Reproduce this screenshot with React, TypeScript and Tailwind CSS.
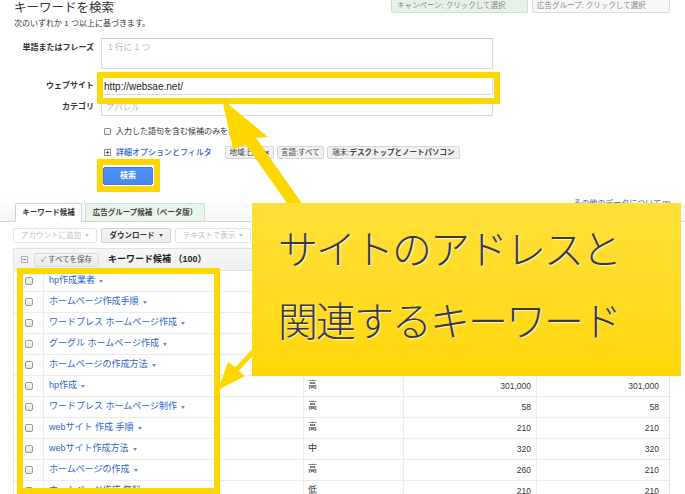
import React from "react";

const rows: [string, string, string, string][] = [
  ["hp作成業者", "高", "1,300", "1,300"],
  ["ホームページ作成手順", "高", "260", "260"],
  ["ワードプレス ホームページ作成", "高", "480", "480"],
  ["グーグル ホームページ作成", "高", "170", "170"],
  ["ホームページの作成方法", "高", "590", "590"],
  ["hp作成", "高", "301,000", "301,000"],
  ["ワードプレス ホームページ制作", "高", "58", "58"],
  ["webサイト 作成 手順", "高", "210", "210"],
  ["webサイト作成方法", "中", "320", "320"],
  ["ホームページの作成", "高", "260", "210"],
  ["ホームページ作成 無料", "低", "210", "210"],
];

function Caret({ cls }: { cls: string }) {
  return (
    <span
      className={`inline-block ml-[4px] w-0 h-0 border-x-[2.5px] border-x-transparent border-t-[3px] ${cls}`}
    />
  );
}

function Check() {
  return (
    <span className="inline-block w-[8px] h-[8px] rounded-[2px] border border-[#9a9a9a] bg-linear-to-b from-white to-[#e4e4e4]" />
  );
}

export default function App() {
  return (
    <div className="relative w-[685px] h-[494px] overflow-hidden bg-white text-[#333] font-['Liberation_Sans','Noto_Sans_CJK_JP',sans-serif]">
      {/* header */}
      <div className="flex h-[19px] pl-[14px] pr-[15px]">
        <h1 className="text-[12.5px] leading-[17px] font-normal text-[#333]">キーワードを検索</h1>
        <div className="ml-auto flex gap-[4px]">
          <div className="w-[137px] h-[13px] bg-[#e6f2e9] border border-[#cddfd1] border-t-0 rounded-b-[2px] text-[7.5px] leading-[12px] text-[#8a8a8a] pl-[5px]">
            キャンペーン: クリックして選択
          </div>
          <div className="w-[138px] h-[13px] bg-[#f8f8f8] border border-[#dcdcdc] border-t-0 rounded-b-[2px] text-[7.5px] leading-[12px] text-[#8a8a8a] pl-[4px]">
            広告グループ: クリックして選択
          </div>
        </div>
      </div>
      <p className="pl-[14px] h-[10px] text-[8px] leading-[10px] text-[#333]">次のいずれか 1 つ以上に基づきます。</p>

      {/* form */}
      <div className="mt-[9px] pl-[14px] grid grid-cols-[80px_392px] gap-x-[7px]">
        <div className="text-right text-[8px] font-bold leading-[10px] pt-[5px]">単語またはフレーズ</div>
        <div className="h-[31px] border border-[#dadada] border-t-[#c8c8c8] pl-[6px] pt-[2px] text-[8.5px] leading-[12px] text-[#b8b8b8]">
          1 行に 1 つ
        </div>

        <div className="mt-[8px] h-[18px] flex items-center justify-end text-[8px] font-bold">ウェブサイト</div>
        <div className="mt-[8px] h-[18px] border border-[#dadada] border-t-[#c8c8c8] pl-[2px] flex items-center text-[10px] text-[#222]">
          http://websae.net/
        </div>

        <div className="mt-[3px] h-[18px] flex items-center justify-end text-[8px] font-bold">カテゴリ</div>
        <div className="mt-[3px] h-[18px] border border-[#dadada] border-t-[#c8c8c8] pl-[4px] flex items-center text-[8.5px] text-[#bbbbbb]">
          アパレル
        </div>

        <div className="col-start-2 mt-[9px] h-[13px] flex items-center pl-[3px] text-[8px]">
          <span className="inline-block w-[7px] h-[7px] rounded-[1px] border border-[#8d8d8d] bg-linear-to-b from-white to-[#e8e8e8]" />
          <span className="ml-[5px]">入力した語句を含む候補のみを表示</span>
        </div>

        <div className="col-start-2 mt-[8px] h-[13px] flex items-center pl-[3px]">
          <svg width="7" height="7" viewBox="0 0 7 7" className="shrink-0">
            <rect x="0.5" y="0.5" width="6" height="6" fill="#fafafa" stroke="#8a8a8a" />
            <path d="M3.5 1.8V5.2M1.8 3.5H5.2" stroke="#555" strokeWidth="1" />
          </svg>
          <span className="ml-[5px] text-[8px] font-medium text-[#2f64c8]">詳細オプションとフィルタ</span>
          <span className="ml-[13px] h-[13px] w-[49px] flex items-center justify-center gap-[3px] bg-[#f1f1f1] border border-[#d6d6d6] rounded-[2px] text-[7.5px] text-[#444]">
            地域:日本 <span className="font-bold text-[#333] text-[8px]">×</span>
          </span>
          <span className="ml-[3px] h-[13px] w-[47px] flex items-center justify-center bg-[#f1f1f1] border border-[#d6d6d6] rounded-[2px] text-[7.5px] text-[#444]">
            言語:すべて
          </span>
          <span className="ml-[3px] h-[13px] w-[133px] flex items-center justify-center bg-[#f1f1f1] border border-[#d6d6d6] rounded-[2px] text-[7.5px] text-[#444]">
            端末: <span className="font-bold">デスクトップとノートパソコン</span>
          </span>
        </div>

        <div className="col-start-2 mt-[8px] ml-[2px] w-[50px] h-[18px] rounded-[2px] border border-[#3a7cec] bg-linear-to-b from-[#4d90fe] to-[#4787ed] flex items-center justify-center text-[8px] font-bold text-white">
          検索
        </div>
      </div>

      {/* tabs */}
      <div className="mt-[11px] h-[26px] flex items-end border-b border-[#d4d4d4] bg-linear-to-b from-white to-[#f5f5f5] pl-[15px] pr-[15px]">
        <div className="w-[67px] h-[19px] -mb-px bg-white border border-[#d0d0d0] border-b-white rounded-t-[2px] flex items-center justify-center text-[7.5px] font-bold text-[#333]">
          キーワード候補
        </div>
        <div className="ml-[3px] w-[120px] h-[18px] bg-[#e9f4eb] border border-[#cfdccf] border-b-0 rounded-t-[2px] flex items-center justify-center text-[7.5px] font-bold text-[#444]">
          広告グループ候補（ベータ版）
        </div>
        <div className="ml-auto self-start mt-[3px] flex items-center gap-[2px] text-[8px] leading-[10px] text-[#2f64c8]">
          その他のデータについて
          <span className="inline-block w-[7px] h-[7px] border border-[#aaa] text-[5px] leading-[5px] text-center text-[#777]">?</span>
        </div>
      </div>

      {/* toolbar */}
      <div className="mt-[6px] pl-[13px] flex gap-[4px] h-[15px]">
        <div className="w-[84px] h-[15px] border border-[#e2e2e2] rounded-[2px] bg-white flex items-center justify-center text-[7.5px] text-[#bdbdbd]">
          アカウントに追加<Caret cls="border-t-[#c4c4c4]" />
        </div>
        <div className="w-[70px] h-[15px] border border-[#d3d3d3] rounded-[2px] bg-linear-to-b from-[#f6f6f6] to-[#ececec] flex items-center justify-center text-[7.5px] font-bold text-[#333]">
          ダウンロード<Caret cls="border-t-[#555]" />
        </div>
        <div className="w-[76px] h-[15px] border border-[#e2e2e2] rounded-[2px] bg-white flex items-center justify-center text-[7.5px] text-[#bdbdbd]">
          テキストで表示<Caret cls="border-t-[#c4c4c4]" />
        </div>
      </div>

      {/* table */}
      <div className="mt-[5px] ml-[13px] w-[657px] border-x border-[#e3e3e3]">
        <div className="h-[23px] flex items-center bg-linear-to-b from-[#f7f7f7] to-[#efefef] border-t border-b border-[#e0e0e0] pl-[7px]">
          <svg width="7" height="7" viewBox="0 0 7 7" className="shrink-0">
            <rect x="0.5" y="0.5" width="6" height="6" fill="#f5f5f5" stroke="#b0b0b0" />
            <path d="M1.8 3.5H5.2" stroke="#888" strokeWidth="1" />
          </svg>
          <div className="ml-[6px] w-[65px] h-[14px] rounded-[2px] border border-[#dcdcdc] bg-linear-to-b from-[#f4f4f4] to-[#e9e9e9] flex items-center justify-center text-[7.5px] text-[#555]">
            <span className="text-[#777] mr-[2px]">✓</span>すべてを保存
          </div>
          <div className="ml-[9px] text-[9px] font-bold text-[#222]">キーワード候補 （100）</div>
        </div>
        {rows.map((r, i) => (
          <div key={i} className="h-[21px] flex border-b border-[#ececec]">
            <div className="w-[30px] border-r border-[#ececec] flex items-center justify-center">
              <Check />
            </div>
            <div className="w-[260px] border-r border-[#ececec] flex items-center pl-[5px] text-[9px] text-[#2f64c8]">
              {r[0]}
              <Caret cls="border-t-[#6b8bd0]" />
            </div>
            <div className="w-[100px] border-r border-[#ececec] flex items-center pl-[4px] text-[9px] text-[#333]">{r[1]}</div>
            <div className="w-[133px] border-r border-[#ececec] flex items-center justify-end pr-[5px] text-[8.5px] text-[#333]">{r[2]}</div>
            <div className="w-[132px] flex items-center justify-end pr-[10px] text-[8.5px] text-[#333]">{r[3]}</div>
          </div>
        ))}
      </div>

      {/* highlight boxes */}
      <div className="absolute left-[97px] top-[72px] w-[403px] h-[32px] border-[6px] border-[#ffd700]" />
      <div className="absolute left-[97px] top-[159px] w-[63px] h-[33px] border-[6px] border-[#ffd700]" />
      <div className="absolute left-[17px] top-[268px] w-[203px] h-[226px] border-[6px] border-[#ffd700]" />

      {/* arrows */}
      <svg className="absolute left-0 top-0" width="685" height="494" viewBox="0 0 685 494">
        <polygon
          points="222,99 268,137 256,138 306,209 296,216 246,145 233,149"
          fill="#ffd700"
        />
        <polygon
          points="218,390 228,362 235.2,367.3 268.2,332.3 271.8,335.7 238.8,370.7 245,376"
          fill="#ffd700"
        />
      </svg>

      {/* callout */}
      <div className="absolute left-[252px] top-[203px] w-[429px] h-[173px] bg-linear-to-b from-[#ffe038] to-[#ffd700] pl-[26px] pt-[8px] font-['Noto_Sans_CJK_JP',sans-serif] font-light text-[40px] leading-[72px] tracking-[-2px] text-[#3a3a3a] [text-shadow:1px_1px_1px_rgba(255,255,255,0.75)]">
        <div>サイトのアドレスと</div>
        <div>関連するキーワード</div>
      </div>
    </div>
  );
}
